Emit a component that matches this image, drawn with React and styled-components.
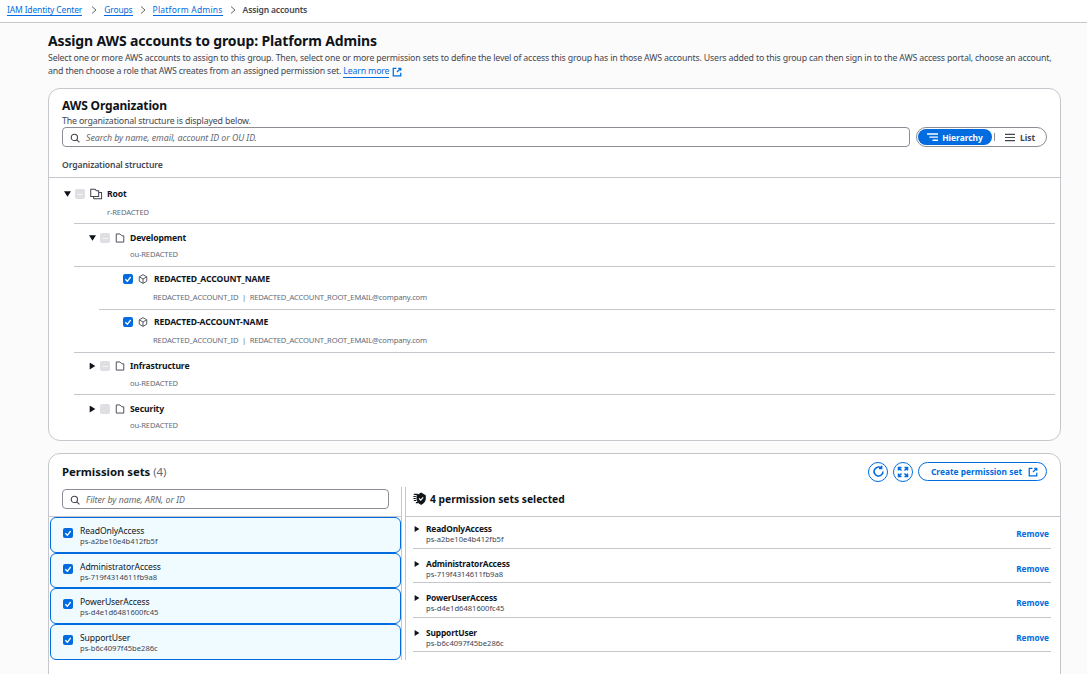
import React from "react";
import styled, { createGlobalStyle } from "styled-components";

const Global = createGlobalStyle`
  html, body { margin: 0; padding: 0; background: #fbfbfc; }
  body { font-family: "Noto Sans", "Open Sans", sans-serif; color: #0f141a; height: 674px; overflow: hidden; }
  * { box-sizing: border-box; }
`;
const blue = "#006ce0";
const line = "#c6c6cd";
const muted = "#5f6b7a";

const Breadcrumb = styled.nav`
  height: 23px; background: #fff; border-bottom: 1px solid ${line};
  display: flex; align-items: center; padding: 0 0 3px 7px; font-size: 8.5px; letter-spacing: -0.15px; gap: 7px;
`;
const Crumb = styled.a`
  color: ${blue}; border-bottom: 1px solid ${blue}; line-height: 11px;
  letter-spacing: ${p => p.$ls ?? -0.15}px; margin-right: ${p => p.$mr || 0}px;
`;
const CrumbCurrent = styled.span`color: #424650; font-weight: 600;`;
const Main = styled.main`padding: 8px 26px 0 48px;`;
const Title = styled.h1`font-size: 14px; letter-spacing: -0.14px; line-height: 20px; font-weight: 700; margin: 0;`;
const Desc = styled.div`margin-top: 1px; font-size: 8.8px; letter-spacing: -0.172px; line-height: 13px; color: #424650;`;
const DescLine = styled.div`display: flex; align-items: baseline; white-space: pre;`;
const LearnMore = styled.a`color: ${blue}; border-bottom: 1px solid ${blue}; line-height: 11px;`;
const ExtLink = styled.span`display: inline-flex; align-self: center; margin-left: 3px; color: ${blue};`;
const Card = styled.section`
  background: #fff; border: 1px solid ${line}; border-radius: 12px; margin-top: ${p => p.$top}px;
  height: ${p => p.$height}px; overflow: hidden;
`;
const CardHead = styled.div`padding: 8px 13px 0;`;
const CardTitle = styled.h2`font-size: 12px; letter-spacing: -0.15px; line-height: 18px; font-weight: 700; margin: 0;`;
const CardSub = styled.div`font-size: 8.8px; letter-spacing: -0.16px; line-height: 11px; color: #424650; margin-top: 1px;`;
const SearchRow = styled.div`display: flex; align-items: center; gap: 6px;`;
const Search = styled.div`
  flex: 1; height: 20px; border: 1px solid #8c8c94; border-radius: 4px; background: #fff;
  display: flex; align-items: center; padding: 1px 0 0 7px; gap: 6px;
  font-size: 8.8px; letter-spacing: -0.05px; font-style: italic; color: #656871;
`;
const Toggle = styled.div`
  width: 131px; height: 20px; border: 1px solid #8c8c94; border-radius: 10px; padding: 1px;
  display: flex; align-items: center; font-size: 8.4px; font-weight: 700; color: #424650;
`;
const ToggleOn = styled.div`
  width: 74px; height: 16px; background: ${blue}; color: #fff; border-radius: 8px;
  display: flex; align-items: center; justify-content: center; gap: 4px;
`;
const ToggleSep = styled.div`width: 1px; height: 8px; background: #8c8c94; margin: 0 10px 0 2px;`;
const ToggleOff = styled.div`display: flex; align-items: center; gap: 5px;`;
const StructLabel = styled.div`font-size: 8.6px; letter-spacing: -0.1px; line-height: 12px; font-weight: 600; color: #424650; margin-top: 12px; height: 18px;`;
const TreeRow = styled.div`
  margin-left: ${p => p.$left}px; margin-right: ${p => p.$right ?? 5}px; height: ${p => p.$h}px;
  padding-left: ${p => p.$pad}px; padding-top: ${p => p.$pt}px;
  border-top: 1px solid ${line};
`;
const TreeMain = styled.div`display: flex; align-items: center; height: 14px;`;
const Caret = styled.span`
  display: block; width: 7px; height: 7px; margin-right: 4px; flex: none;
  background: #0f141a;
  clip-path: ${p => p.$open ? "polygon(0 10%, 100% 10%, 50% 90%)" : "polygon(10% 0, 90% 50%, 10% 100%)"};
`;
const Check = styled.span`
  width: 10px; height: 10px; border-radius: 2px; flex: none; display: flex; align-items: center; justify-content: center;
  background: ${p => p.$on ? blue : "#dedee3"};
`;
const Dash = styled.span`width: 6px; height: 1px; background: #f4f4f4;`;
const Name = styled.span`font-size: 8.6px; letter-spacing: -0.12px; font-weight: 700; color: #0f141a; margin-left: ${p => p.$ml || 0}px;`;
const Meta = styled.div`font-size: 7.6px; letter-spacing: -0.15px; line-height: 10px; color: ${muted}; padding-left: ${p => p.$pad}px; margin-top: ${p => p.$mt}px; white-space: pre;`;
const IconBox = styled.span`display: flex; flex: none; margin-left: ${p => p.$ml || 0}px; color: ${p => p.$color || "inherit"};`;
const PermHead = styled.div`display: flex; align-items: center; justify-content: space-between; height: 33px; padding: 2px 13px 0;`;
const PermTitle = styled.h2`font-size: 11.4px; letter-spacing: -0.05px; font-weight: 700; margin: 0; span { font-weight: 400; color: #5f6b7a; }`;
const Actions = styled.div`display: flex; align-items: center; gap: 5px;`;
const RoundBtn = styled.button`
  width: 20px; height: 20px; border-radius: 50%; border: 1px solid ${blue}; background: #fff; padding: 0;
  display: flex; align-items: center; justify-content: center; color: ${blue};
`;
const CreateBtn = styled.button`
  width: 129px; height: 19px; border-radius: 10px; border: 1px solid ${blue}; background: #fff; padding: 0 0 0 4px;
  display: flex; align-items: center; justify-content: center; gap: 6px; color: ${blue};
  font: 700 8.4px "Noto Sans", sans-serif;
`;
const Columns = styled.div`display: grid; grid-template-columns: 353px 1fr;`;
const LeftCol = styled.div`border-right: 1px solid ${line};`;
const FilterWrap = styled.div`padding: 2px 12px 0 13px; height: 30px; border-bottom: 1px solid ${line}; display: flex; align-items: flex-start;`;
const Items = styled.div`padding: 0 0 0 1px; display: flex; flex-direction: column;`;
const Item = styled.div`
  height: ${p => p.$h}px; border: 1px solid ${blue}; border-radius: 6px; background: #f0fbff;
  display: flex; align-items: flex-start; padding: 10px 0 0 12px; gap: 7px;
`;
const ItemText = styled.div`display: flex; flex-direction: column; margin-top: ${p => p.$mt || 0}px;`;
const ItemName = styled.div`font-size: 8.6px; letter-spacing: -0.1px; line-height: 10px; color: #0f141a;`;
const ItemId = styled.div`font-size: 7.6px; line-height: 10px; color: #424650;`;
const RightCol = styled.div`margin-left: 3px; border-left: 1px solid ${line};`;
const RightHead = styled.div`
  height: 30px; border-bottom: 1px solid ${line}; display: flex; align-items: flex-start; padding: 5px 0 0 7px; gap: 4px;
  font-size: 10.3px; font-weight: 700; line-height: 14px;
`;
const Selected = styled.div`
  height: ${p => p.$h}px; margin: 0 9px 0 7px; border-bottom: 1px solid ${line};
  display: flex; justify-content: space-between; padding-top: ${p => p.$pt}px;
`;
const SelMain = styled.div`display: flex; align-items: flex-start;`;
const SelCaret = styled(Caret)`width: 6px; height: 6px; margin: 3px 6px 0 1px;`;
const SelName = styled.span`font-size: 8.4px; letter-spacing: -0.15px; line-height: 11px; font-weight: 700;`;
const Remove = styled.a`font-size: 8.2px; line-height: 11px; font-weight: 700; color: ${blue}; margin: 5px 2px 0 0;`;

const Ext = ({ s = 10 }) => (
  <svg width={s} height={s} viewBox="0 0 16 16" fill="none" stroke="currentColor" strokeWidth="2">
    <path d="M7 2H2v12h12V9M10 2h4v4M14 2L8 8" />
  </svg>
);
const Glass = () => (
  <svg width="10" height="10" viewBox="0 0 16 16" fill="none" stroke="#424650" strokeWidth="1.8">
    <circle cx="7" cy="7" r="5" /><path d="M11 11l4 4" />
  </svg>
);
const Tick = () => (
  <svg width="8" height="8" viewBox="0 0 12 12" fill="none" stroke="#fff" strokeWidth="2"><path d="M2 6.5L5 9.5 10 3" /></svg>
);
const Folder = () => (
  <svg width="10" height="10" viewBox="0 0 16 16" fill="none" stroke="#424650" strokeWidth="1.5">
    <path d="M2 1.5h6l3 3h3v10H2z" />
  </svg>
);
const Folders = () => (
  <svg width="13" height="12" viewBox="0 0 18 16" fill="none" stroke="#424650" strokeWidth="1.4">
    <path d="M1 1.5h6l2 2h3v8H1z" /><path d="M5 14.5v-3M5 14.5h11V6h-4" />
  </svg>
);
const Cube = () => (
  <svg width="10" height="10" viewBox="0 0 16 16" fill="none" stroke="#424650" strokeWidth="1.4">
    <path d="M8 1l6 3.5v7L8 15l-6-3.5v-7zM2 4.5L8 8l6-3.5M8 8v7" />
  </svg>
);
const HierIcon = () => (
  <svg width="11" height="9" viewBox="0 0 14 11" fill="none" stroke="currentColor" strokeWidth="1.8">
    <path d="M0 1h14M3 5h11M7 9h7" />
  </svg>
);
const ListIcon = () => (
  <svg width="10" height="9" viewBox="0 0 14 11" fill="none" stroke="currentColor" strokeWidth="1.7">
    <path d="M0 1h14M0 5.5h14M0 10h14" />
  </svg>
);
const Refresh = () => (
  <svg width="13" height="13" viewBox="0 0 16 16" fill="none" stroke="currentColor" strokeWidth="1.9">
    <path d="M13.5 8A5.500 5.500 0 1 1 11.500 3.800M11.800 1v3.200H8.600" />
  </svg>
);
const Expand = () => (
  <svg width="12" height="12" viewBox="0 0 16 16" fill="none" stroke="currentColor" strokeWidth="2">
    <path d="M2 6V2h4M10 2h4v4M14 10v4h-4M6 14H2v-4M3 3l3 3M13 3l-3 3M13 13l-3-3M3 13l3-3" />
  </svg>
);
const Shield = () => (
  <svg width="13" height="13" viewBox="0 0 16 16" fill="none" stroke="#0f141a" strokeWidth="1.4">
    <path d="M1 3h5M0.500 5.500h3M0.500 8h3M1 10.500h3M3.500 13h3" />
    <path d="M5 4.500l5-3 5 3v4c0 3-2.500 5-5 6.500-2.500-1.500-5-3.500-5-6.500z" fill="#0f141a" />
    <path d="M7.500 8l2 2 3-3.500" stroke="#fff" />
  </svg>
);
const Chevron = () => (
  <IconBox $color="#656871">
    <svg width="6" height="8" viewBox="0 0 6 8" fill="none" stroke="currentColor"><path d="M1 .5L5 4 1 7.500" /></svg>
  </IconBox>
);

const perms = [
  ["ReadOnlyAccess", "ps-a2be10e4b412fb5f", 36, 32, 6],
  ["AdministratorAccess", "ps-719f4314611fb9a8", 35, 34, 9],
  ["PowerUserAccess", "ps-d4e1d6481600fc45", 36, 35, 9],
  ["SupportUser", "ps-b6c4097f45be286c", 36, 34, 9],
];
const ACCOUNT_META = "REDACTED_ACCOUNT_ID  |  REDACTED_ACCOUNT_ROOT_EMAIL@company.com";

export default function App() {
  return (
    <>
      <Global />
      <Breadcrumb>
        <Crumb $mr={2}>IAM Identity Center</Crumb><Chevron />
        <Crumb>Groups</Crumb><Chevron />
        <Crumb $ls={0.2}>Platform Admins</Crumb><Chevron />
        <CrumbCurrent>Assign accounts</CrumbCurrent>
      </Breadcrumb>
      <Main>
        <Title>Assign AWS accounts to group: Platform Admins</Title>
        <Desc>
          <DescLine>Select one or more AWS accounts to assign to this group. Then, select one or more permission sets to define the level of access this group has in those AWS accounts. Users added to this group can then sign in to the AWS access portal, choose an account,</DescLine>
          <DescLine>{"and then choose a role that AWS creates from an assigned permission set. "}<LearnMore>Learn more</LearnMore><ExtLink><Ext /></ExtLink></DescLine>
        </Desc>
        <Card $top={10} $height={353}>
          <CardHead>
            <CardTitle>AWS Organization</CardTitle>
            <CardSub>The organizational structure is displayed below.</CardSub>
            <SearchRow>
              <Search><Glass />Search by name, email, account ID or OU ID.</Search>
              <Toggle>
                <ToggleOn><HierIcon />Hierarchy</ToggleOn>
                <ToggleSep />
                <ToggleOff><ListIcon />List</ToggleOff>
              </Toggle>
            </SearchRow>
            <StructLabel>Organizational structure</StructLabel>
          </CardHead>
          <TreeRow $left={0} $right={0} $pad={15} $pt={9} $h={46}>
            <TreeMain><Caret $open /><Check><Dash /></Check><IconBox $ml={5}><Folders /></IconBox><Name $ml={4}>Root</Name></TreeMain>
            <Meta $pad={43} $mt={6}>r-REDACTED</Meta>
          </TreeRow>
          <TreeRow $left={25} $pad={15} $pt={7} $h={43}>
            <TreeMain><Caret $open /><Check><Dash /></Check><IconBox $ml={5}><Folder /></IconBox><Name $ml={5}>Development</Name></TreeMain>
            <Meta $pad={41} $mt={4}>ou-REDACTED</Meta>
          </TreeRow>
          <TreeRow $left={25} $pad={49} $pt={5} $h={43}>
            <TreeMain><Check $on><Tick /></Check><IconBox $ml={5}><Cube /></IconBox><Name $ml={6}>REDACTED_ACCOUNT_NAME</Name></TreeMain>
            <Meta $pad={30} $mt={6}>{ACCOUNT_META}</Meta>
          </TreeRow>
          <TreeRow $left={50} $pad={24} $pt={5} $h={43}>
            <TreeMain><Check $on><Tick /></Check><IconBox $ml={5}><Cube /></IconBox><Name $ml={6}>REDACTED-ACCOUNT-NAME</Name></TreeMain>
            <Meta $pad={30} $mt={6}>{ACCOUNT_META}</Meta>
          </TreeRow>
          <TreeRow $left={25} $pad={15} $pt={6} $h={42}>
            <TreeMain><Caret /><Check><Dash /></Check><IconBox $ml={5}><Folder /></IconBox><Name $ml={5}>Infrastructure</Name></TreeMain>
            <Meta $pad={41} $mt={5}>ou-REDACTED</Meta>
          </TreeRow>
          <TreeRow $left={25} $pad={15} $pt={7} $h={44}>
            <TreeMain><Caret /><Check /><IconBox $ml={5}><Folder /></IconBox><Name $ml={5}>Security</Name></TreeMain>
            <Meta $pad={41} $mt={4}>ou-REDACTED</Meta>
          </TreeRow>
        </Card>
        <Card $top={12} $height={240}>
          <PermHead>
            <PermTitle>Permission sets <span>(4)</span></PermTitle>
            <Actions>
              <RoundBtn><Refresh /></RoundBtn>
              <RoundBtn><Expand /></RoundBtn>
              <CreateBtn>Create permission set <Ext /></CreateBtn>
            </Actions>
          </PermHead>
          <Columns>
            <LeftCol>
              <FilterWrap><Search><Glass />Filter by name, ARN, or ID</Search></FilterWrap>
              <Items>
                {perms.map(([n, id, h]) => (
                  <Item key={n} $h={h}>
                    <Check $on><Tick /></Check>
                    <ItemText $mt={-2}><ItemName>{n}</ItemName><ItemId>{id}</ItemId></ItemText>
                  </Item>
                ))}
              </Items>
            </LeftCol>
            <RightCol>
              <RightHead><Shield />4 permission sets selected</RightHead>
              {perms.map(([n, id, , h, pt]) => (
                <Selected key={n} $h={h} $pt={pt}>
                  <SelMain><SelCaret /><ItemText><SelName>{n}</SelName><ItemId>{id}</ItemId></ItemText></SelMain>
                  <Remove>Remove</Remove>
                </Selected>
              ))}
            </RightCol>
          </Columns>
        </Card>
      </Main>
    </>
  );
}
